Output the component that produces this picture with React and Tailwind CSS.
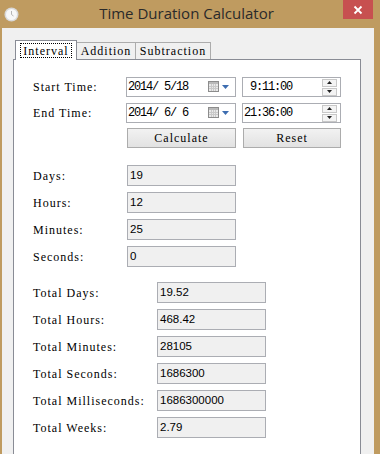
import React from 'react'

const label = "font-['Liberation_Serif','Times_New_Roman',serif] text-[12px] tracking-[1px] text-black leading-none"
const mono = "font-['Liberation_Mono',monospace] text-[12px] tracking-[-1.2px] text-black leading-none whitespace-pre"
const value = "font-['Liberation_Sans',Arial,sans-serif] text-[11.5px] text-black leading-none"

function CalendarIcon() {
  return (
    <svg width="22" height="12" viewBox="0 0 22 12" className="shrink-0">
      <rect x="0.5" y="0.5" width="10" height="10" fill="#e9e9e9" stroke="#8c8c8c" />
      <rect x="1" y="1" width="9" height="2" fill="#b9b9b9" />
      <path d="M3.5 3v7M5.5 3v7M7.5 3v7M1 5.5h9M1 7.5h9" stroke="#c9c9c9" strokeWidth="1" />
      <path d="M14 4h7l-3.5 4z" fill="#3d6db0" />
    </svg>
  )
}

function Spinner() {
  return (
    <div className="flex flex-col gap-[1px] shrink-0">
      <div className="w-[15px] h-[8px] border border-[#c8c8c8] bg-[#f4f4f4] flex items-center justify-center">
        <svg width="5" height="3" viewBox="0 0 5 3"><path d="M2.5 0L5 3H0z" fill="#222" /></svg>
      </div>
      <div className="w-[15px] h-[8px] border border-[#c8c8c8] bg-[#f4f4f4] flex items-center justify-center">
        <svg width="5" height="3" viewBox="0 0 5 3"><path d="M0 0h5L2.5 3z" fill="#222" /></svg>
      </div>
    </div>
  )
}

function DateBox({ text }) {
  return (
    <div className="w-[110px] h-[20px] border border-[#abadb3] bg-white flex items-center pl-[1px] pr-[5px]">
      <span className={`${mono} flex-1`}>{text}</span>
      <CalendarIcon />
    </div>
  )
}

function TimeBox({ text }) {
  return (
    <div className="w-[99px] h-[20px] border border-[#abadb3] bg-white flex items-center pl-[1px] pr-[3px]">
      <span className={`${mono} flex-1`}>{text}</span>
      <Spinner />
    </div>
  )
}

function Result({ name, val, wide }) {
  return (
    <div className="flex items-center h-[21px]">
      <span className={`${label} ${wide ? 'w-[124px]' : 'w-[94px]'} shrink-0`}>{name}</span>
      <div className="w-[109px] h-[21px] border border-[#abadb3] bg-[#f0f0f0] flex items-center pl-[2px]">
        <span className={value}>{val}</span>
      </div>
    </div>
  )
}

function Button({ children, w }) {
  return (
    <div className={`${w} h-[20px] border border-[#acacac] bg-gradient-to-b from-[#f2f2f2] to-[#e2e2e2] flex items-center justify-center`}>
      <span className={label}>{children}</span>
    </div>
  )
}

export default function App() {
  return (
    <div className="w-[380px] h-[454px] bg-[#bf9b60] flex flex-col overflow-hidden">
      {/* title bar */}
      <div className="h-[28px] flex items-start shrink-0">
        <div className="w-[30px] h-[28px] flex items-center pl-[4px]">
          <svg width="15" height="15" viewBox="0 0 15 15">
            <circle cx="7.5" cy="7.5" r="7" fill="#d9d9d9" />
            <circle cx="7.5" cy="7.5" r="5.5" fill="#f7f7f7" />
            <path d="M7.5 4v3.5l2 1.5" stroke="#b5b5b5" strokeWidth="1" fill="none" />
          </svg>
        </div>
        <div className="flex-1 h-[27px] flex items-center justify-center">
          <span className="font-['Open_Sans',sans-serif] text-[15px] text-[#2a2a2a]">Time Duration Calculator</span>
        </div>
        <div className="w-[30px] h-[19px] bg-[#c75050] flex items-center justify-center">
          <svg width="10" height="10" viewBox="0 0 10 10">
            <path d="M1.5 1.5l7 7M8.5 1.5l-7 7" stroke="#fff" strokeWidth="1.8" />
          </svg>
        </div>
        <div className="w-[7px]" />
      </div>

      {/* client area */}
      <div className="flex-1 ml-[2px] mr-[6px] bg-[#f0f0f0] pt-[12px] pl-[11px] flex flex-col">
        <div className="flex items-end ml-[2px] h-[19px] relative z-10">
          <div className="w-[62px] h-[20px] -mb-[1px] border border-b-0 border-[#898c95] bg-white flex items-center justify-center">
            <div className="border border-dotted border-black px-[2px] h-[15px] flex items-center">
              <span className={label}>Interval</span>
            </div>
          </div>
          <div className="w-[59px] h-[17px] border border-b-0 border-l-0 border-[#acacac] bg-[#f0f0f0] flex items-center justify-center">
            <span className={label}>Addition</span>
          </div>
          <div className="w-[75px] h-[17px] border border-b-0 border-l-0 border-[#acacac] bg-[#f0f0f0] flex items-center justify-center">
            <span className={label}>Subtraction</span>
          </div>
        </div>

        <div className="w-[348px] flex-1 border border-b-0 border-[#898c95] bg-white pl-[19px] pt-[17px] flex flex-col">
          <div className="flex items-center h-[20px]">
            <span className={`${label} w-[93px] shrink-0`}>Start Time:</span>
            <DateBox text="2014/ 5/18" />
            <div className="w-[6px]" />
            <TimeBox text=" 9:11:00" />
          </div>
          <div className="flex items-center h-[20px] mt-[6px]">
            <span className={`${label} w-[93px] shrink-0`}>End Time:</span>
            <DateBox text="2014/ 6/ 6" />
            <div className="w-[6px]" />
            <TimeBox text="21:36:00" />
          </div>
          <div className="flex items-center mt-[5px] pl-[94px] gap-[7px]">
            <Button w="w-[109px]">Calculate</Button>
            <Button w="w-[98px]">Reset</Button>
          </div>

          <div className="flex flex-col gap-[6px] mt-[17px]">
            <Result name="Days:" val="19" />
            <Result name="Hours:" val="12" />
            <Result name="Minutes:" val="25" />
            <Result name="Seconds:" val="0" />
          </div>

          <div className="flex flex-col gap-[6px] mt-[15px]">
            <Result wide name="Total Days:" val="19.52" />
            <Result wide name="Total Hours:" val="468.42" />
            <Result wide name="Total Minutes:" val="28105" />
            <Result wide name="Total Seconds:" val="1686300" />
            <Result wide name="Total Milliseconds:" val="1686300000" />
            <Result wide name="Total Weeks:" val="2.79" />
          </div>
        </div>
      </div>
    </div>
  )
}
